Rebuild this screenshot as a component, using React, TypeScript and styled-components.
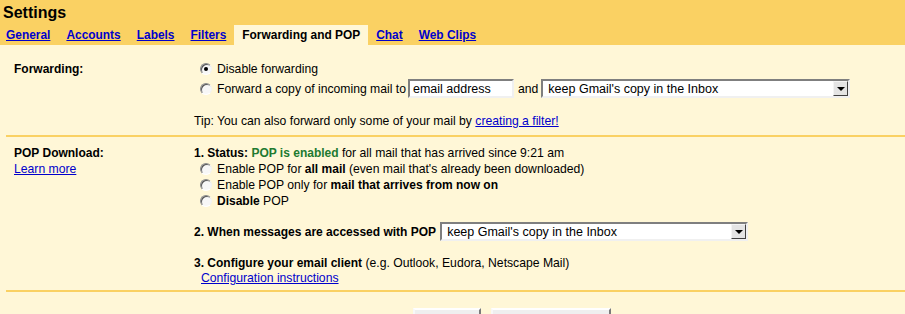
import styled, { createGlobalStyle, css } from "styled-components";

const GlobalStyle = createGlobalStyle`
  html, body {
    margin: 0;
    padding: 0;
    background: #fff7d7;
  }
  body {
    font-family: "Liberation Sans", Arial, sans-serif;
    font-size: 12.2px;
    color: #000;
  }
  b {
    font-size: 12px;
  }
`;

const Header = styled.div`
  background: #fad163;
`;

const Title = styled.div`
  height: 25px;
  padding-left: 3px;
  font-size: 16px;
  font-weight: bold;
  line-height: 25px;
`;

const Tabs = styled.div`
  display: flex;
  height: 20px;
  margin-left: -2px;
`;

const Tab = styled.a<{ $active?: boolean }>`
  padding: 0 8px;
  line-height: 20px;
  font-size: 11.93px;
  font-weight: bold;
  color: #0000cc;
  text-decoration: underline;
  cursor: pointer;
  ${({ $active }) =>
    $active &&
    css`
      background: #fff7d7;
      color: #000;
      text-decoration: none;
    `}
`;

const Section = styled.div<{ $top: number; $bottom: number }>`
  display: grid;
  grid-template-columns: 180px 1fr;
  margin-left: 6px;
  padding: ${({ $top, $bottom }) => `${$top}px 0 ${$bottom}px 8px`};
  border-bottom: 2px solid #fad163;
`;

const LabelCol = styled.div`
  line-height: 16px;
`;

const Label = styled.div`
  font-weight: bold;
  font-size: 12px;
`;

const Link = styled.a`
  color: #0000cc;
  text-decoration: underline;
  cursor: pointer;
`;

const Body = styled.div`
  line-height: 16px;
`;

const Line = styled.div<{ $mt?: number }>`
  display: flex;
  align-items: center;
  min-height: 16px;
  margin-top: ${({ $mt }) => $mt ?? 0}px;
`;

const RadioRow = styled(Line)`
  padding-left: 6px;
`;

const Radio = styled.span<{ $checked?: boolean }>`
  position: relative;
  box-sizing: border-box;
  flex: none;
  width: 12px;
  height: 12px;
  margin-right: 5px;
  border-radius: 50%;
  border: 1px solid;
  border-color: #8a8a8a #f2f2f2 #ffffff #8a8a8a;
  background: #f7f7f7;
  box-shadow: inset 1px 1px 0 #555;
  ${({ $checked }) =>
    $checked &&
    css`
      &::after {
        content: "";
        position: absolute;
        left: 3px;
        top: 3px;
        width: 4px;
        height: 4px;
        border-radius: 50%;
        background: #000;
      }
    `}
`;

const TextInput = styled.div`
  box-sizing: border-box;
  width: 106px;
  height: 19px;
  margin-left: 2px;
  padding: 1px 3px 0;
  border: 2px solid;
  border-color: #7f7f7f #f0f0f0 #f0f0f0 #7f7f7f;
  background: #fff;
  line-height: 14px;
  font-size: 12.5px;
`;

const SelectBox = styled.div<{ $w: number; $ml: number }>`
  box-sizing: border-box;
  display: flex;
  align-items: center;
  justify-content: space-between;
  width: ${({ $w }) => $w}px;
  height: 19px;
  margin-left: ${({ $ml }) => $ml}px;
  padding-left: 5px;
  border: 2px solid;
  border-color: #7f7f7f #f0f0f0 #f0f0f0 #7f7f7f;
  background: #fff;
  font-size: 12.5px;
`;

const Arrow = styled.span`
  box-sizing: border-box;
  display: flex;
  align-items: center;
  justify-content: center;
  width: 15px;
  height: 15px;
  border: 1px solid;
  border-color: #f4f4f4 #404040 #404040 #f4f4f4;
  background: #e4e4e4;

  &::before {
    content: "";
    border-left: 4px solid transparent;
    border-right: 4px solid transparent;
    border-top: 4px solid #000;
    margin-top: 1px;
  }
`;

const Gap = styled.span`
  margin-left: 4px;
`;

const Green = styled.b`
  color: #217a30;
`;

const Indented = styled.div`
  padding-left: 7px;
  line-height: 14px;
`;

const Buttons = styled.div`
  display: flex;
  gap: 10px;
  padding: 16px 0 0 413px;
`;

const Button = styled.button<{ $w: number }>`
  box-sizing: border-box;
  width: ${({ $w }) => $w}px;
  height: 32px;
  border: 2px solid;
  border-color: #ffffff #7a7a7a #7a7a7a #f8f8f8;
  background: #efefef;
  font-family: "Liberation Sans", Arial, sans-serif;
  font-size: 12px;
  padding: 12px 0 0;
`;

const Select = ({ w, ml, value }: { w: number; ml: number; value: string }) => (
  <SelectBox $w={w} $ml={ml}>
    <span>{value}</span>
    <Arrow />
  </SelectBox>
);

export default function App() {
  return (
    <>
      <GlobalStyle />
      <Header>
        <Title>Settings</Title>
        <Tabs>
          <Tab>General</Tab>
          <Tab>Accounts</Tab>
          <Tab>Labels</Tab>
          <Tab>Filters</Tab>
          <Tab $active>Forwarding and POP</Tab>
          <Tab>Chat</Tab>
          <Tab>Web Clips</Tab>
        </Tabs>
      </Header>

      <Section $top={16} $bottom={6}>
        <LabelCol>
          <Label>Forwarding:</Label>
        </LabelCol>
        <Body>
          <RadioRow>
            <Radio $checked />
            Disable forwarding
          </RadioRow>
          <RadioRow $mt={2}>
            <Radio />
            Forward a copy of incoming mail to
            <TextInput>email address</TextInput>
            <Gap>and</Gap>
            <Select w={309} ml={3} value="keep Gmail's copy in the Inbox" />
          </RadioRow>
          <Line $mt={15}>
            Tip: You can also forward only some of your mail by&nbsp;
            <Link>creating a filter!</Link>
          </Line>
        </Body>
      </Section>

      <Section $top={8} $bottom={5}>
        <LabelCol>
          <Label>POP Download:</Label>
          <Link>Learn more</Link>
        </LabelCol>
        <Body>
          <Line>
            <span>
              <b>1. Status:</b> <Green>POP is enabled</Green> for all mail that
              has arrived since 9:21 am
            </span>
          </Line>
          <RadioRow>
            <Radio />
            <span>
              Enable POP for <b>all mail</b> (even mail that's already been
              downloaded)
            </span>
          </RadioRow>
          <RadioRow>
            <Radio />
            <span>
              Enable POP only for <b>mail that arrives from now on</b>
            </span>
          </RadioRow>
          <RadioRow>
            <Radio />
            <span>
              <b>Disable</b> POP
            </span>
          </RadioRow>
          <Line $mt={13}>
            <b>2. When messages are accessed with POP</b>
            <Select w={308} ml={4} value="keep Gmail's copy in the Inbox" />
          </Line>
          <Line $mt={14}>
            <span>
              <b>3. Configure your email client</b> (e.g. Outlook, Eudora,
              Netscape Mail)
            </span>
          </Line>
          <Indented>
            <Link>Configuration instructions</Link>
          </Indented>
        </Body>
      </Section>

      <Buttons>
        <Button $w={68}>Cancel</Button>
        <Button $w={120}>Save Changes</Button>
      </Buttons>
    </>
  );
}
